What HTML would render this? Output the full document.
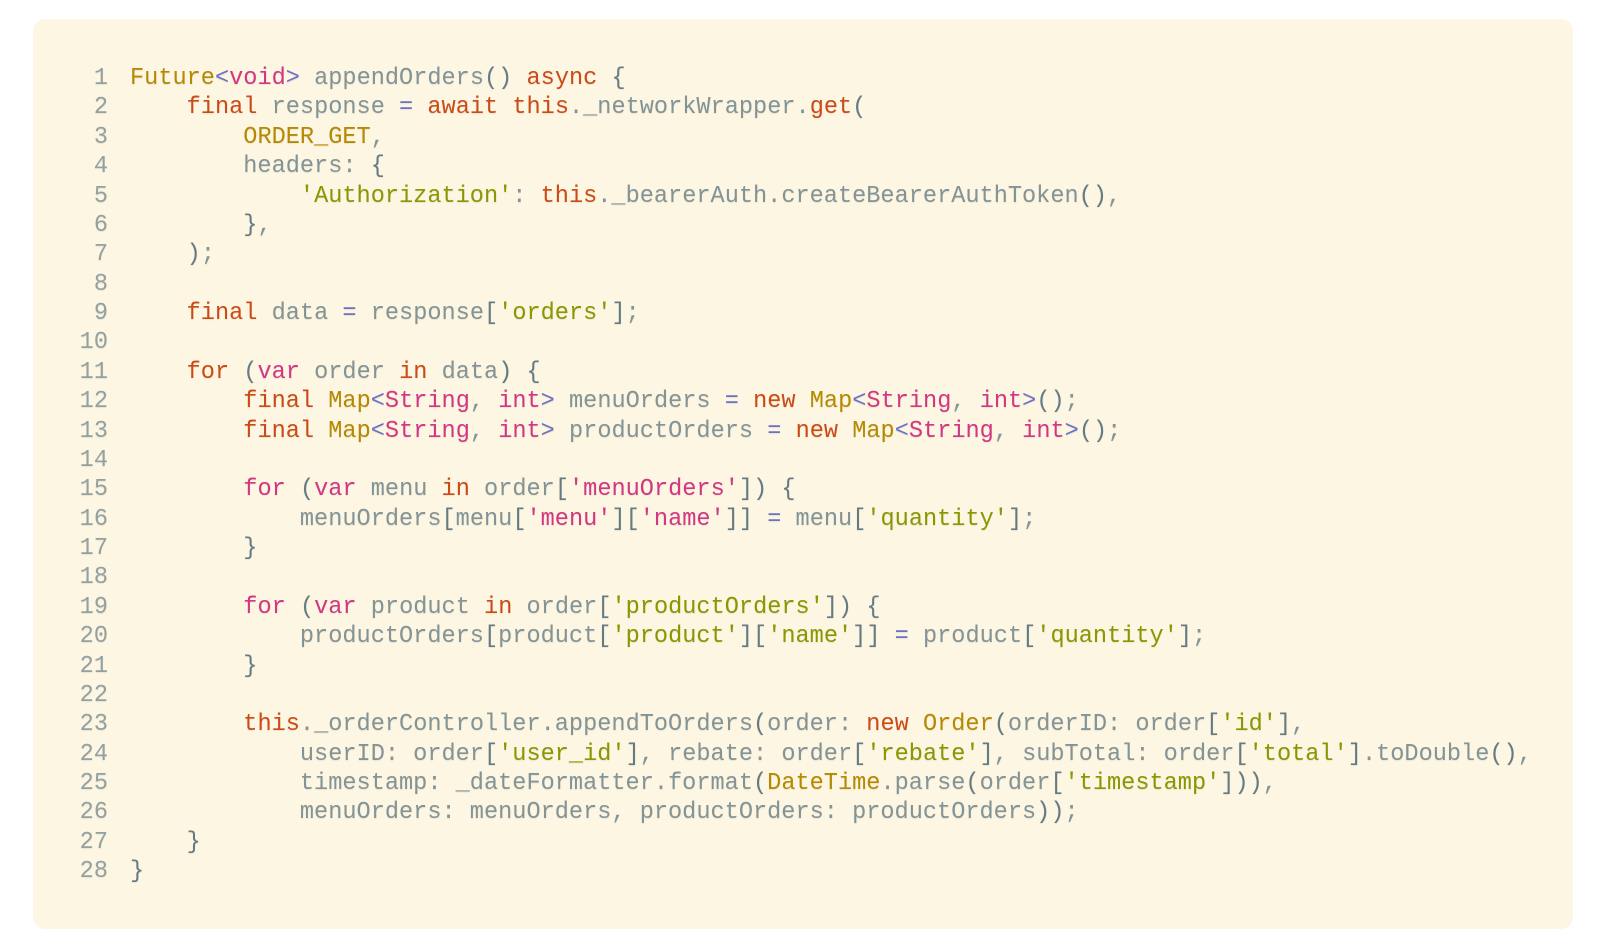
<!DOCTYPE html>
<html><head><meta charset="utf-8"><style>
html,body{margin:0;padding:0;background:#fff;width:1608px;height:948px;overflow:hidden}
.box{position:absolute;left:33px;top:19px;width:1540px;height:910px;background:#fdf6e3;border-radius:12px}
pre{position:absolute;left:0;top:64px;margin:0;font-family:"Liberation Mono",monospace;font-size:23.6px;line-height:29.38px;color:#839496;text-shadow:0 1px 1px rgba(0,0,0,0.08)}
.n{display:inline-block;width:108px;text-align:right;padding-right:22px;color:#93a1a1}
.k{color:#cb4b16}.t{color:#b58900}.m{color:#d33682}.v{color:#6c71c4}.s{color:#859900}.p{color:#657b83}
</style></head><body><div class="box"></div>
<pre><span class="n">1</span><span class="t">Future</span><span class="v">&lt;</span><span class="m">void</span><span class="v">&gt;</span> appendOrders<span class="p">()</span> <span class="k">async</span> <span class="p">{</span>
<span class="n">2</span>    <span class="k">final</span> response <span class="v">=</span> <span class="k">await</span> <span class="k">this</span>._networkWrapper.<span class="k">get</span><span class="p">(</span>
<span class="n">3</span>        <span class="t">ORDER_GET</span>,
<span class="n">4</span>        headers: <span class="p">{</span>
<span class="n">5</span>            <span class="s">'Authorization'</span>: <span class="k">this</span>._bearerAuth.createBearerAuthToken<span class="p">()</span>,
<span class="n">6</span>        <span class="p">}</span>,
<span class="n">7</span>    <span class="p">)</span>;
<span class="n">8</span>
<span class="n">9</span>    <span class="k">final</span> data <span class="v">=</span> response<span class="p">[</span><span class="s">'orders'</span><span class="p">]</span>;
<span class="n">10</span>
<span class="n">11</span>    <span class="k">for</span> <span class="p">(</span><span class="m">var</span> order <span class="k">in</span> data<span class="p">)</span> <span class="p">{</span>
<span class="n">12</span>        <span class="k">final</span> <span class="t">Map</span><span class="v">&lt;</span><span class="m">String</span>, <span class="m">int</span><span class="v">&gt;</span> menuOrders <span class="v">=</span> <span class="k">new</span> <span class="t">Map</span><span class="v">&lt;</span><span class="m">String</span>, <span class="m">int</span><span class="v">&gt;</span><span class="p">()</span>;
<span class="n">13</span>        <span class="k">final</span> <span class="t">Map</span><span class="v">&lt;</span><span class="m">String</span>, <span class="m">int</span><span class="v">&gt;</span> productOrders <span class="v">=</span> <span class="k">new</span> <span class="t">Map</span><span class="v">&lt;</span><span class="m">String</span>, <span class="m">int</span><span class="v">&gt;</span><span class="p">()</span>;
<span class="n">14</span>
<span class="n">15</span>        <span class="m">for</span> <span class="p">(</span><span class="m">var</span> menu <span class="k">in</span> order<span class="p">[</span><span class="m">'menuOrders'</span><span class="p">])</span> <span class="p">{</span>
<span class="n">16</span>            menuOrders<span class="p">[</span>menu<span class="p">[</span><span class="m">'menu'</span><span class="p">][</span><span class="m">'name'</span><span class="p">]]</span> <span class="v">=</span> menu<span class="p">[</span><span class="s">'quantity'</span><span class="p">]</span>;
<span class="n">17</span>        <span class="p">}</span>
<span class="n">18</span>
<span class="n">19</span>        <span class="m">for</span> <span class="p">(</span><span class="m">var</span> product <span class="k">in</span> order<span class="p">[</span><span class="s">'productOrders'</span><span class="p">])</span> <span class="p">{</span>
<span class="n">20</span>            productOrders<span class="p">[</span>product<span class="p">[</span><span class="s">'product'</span><span class="p">][</span><span class="s">'name'</span><span class="p">]]</span> <span class="v">=</span> product<span class="p">[</span><span class="s">'quantity'</span><span class="p">]</span>;
<span class="n">21</span>        <span class="p">}</span>
<span class="n">22</span>
<span class="n">23</span>        <span class="k">this</span>._orderController.appendToOrders<span class="p">(</span>order: <span class="k">new</span> <span class="t">Order</span><span class="p">(</span>orderID: order<span class="p">[</span><span class="s">'id'</span><span class="p">]</span>,
<span class="n">24</span>            userID: order<span class="p">[</span><span class="s">'user_id'</span><span class="p">]</span>, rebate: order<span class="p">[</span><span class="s">'rebate'</span><span class="p">]</span>, subTotal: order<span class="p">[</span><span class="s">'total'</span><span class="p">]</span>.toDouble<span class="p">()</span>,
<span class="n">25</span>            timestamp: _dateFormatter.format<span class="p">(</span><span class="t">DateTime</span>.parse<span class="p">(</span>order<span class="p">[</span><span class="s">'timestamp'</span><span class="p">]))</span>,
<span class="n">26</span>            menuOrders: menuOrders, productOrders: productOrders<span class="p">))</span>;
<span class="n">27</span>    <span class="p">}</span>
<span class="n">28</span><span class="p">}</span></pre>
</body></html>
